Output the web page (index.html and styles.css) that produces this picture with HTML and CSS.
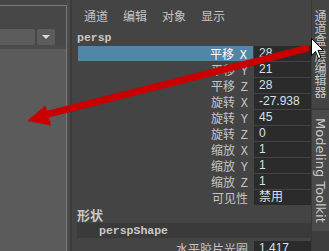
FILE: index.html
```html
<!DOCTYPE html>
<html>
<head>
<meta charset="utf-8">
<link rel="stylesheet" href="styles.css">
</head>
<body>
<div class="app">
  <div class="left">
    <div class="left-top"></div>
    <div class="left-frame">
      <div class="left-head">
        <div class="dd-field"></div>
        <div class="dd-btn"><span class="tri"></span></div>
      </div>
      <div class="left-gap"></div>
      <div class="left-body"></div>
    </div>
  </div>
  <div class="splitter"></div>
  <div class="cb">
    <div class="menu">
      <span class="mi">通道</span><span class="mi">编辑</span><span class="mi">对象</span><span class="mi">显示</span>
    </div>
    <div class="node">persp</div>
    <div class="rows">
      <div class="row sel"><div class="lab">平移 <span class="ax">X</span></div><div class="val">28</div></div>
      <div class="row"><div class="lab">平移 <span class="ax">Y</span></div><div class="val">21</div></div>
      <div class="row"><div class="lab">平移 <span class="ax">Z</span></div><div class="val">28</div></div>
      <div class="row"><div class="lab">旋转 <span class="ax">X</span></div><div class="val">-27.938</div></div>
      <div class="row"><div class="lab">旋转 <span class="ax">Y</span></div><div class="val">45</div></div>
      <div class="row"><div class="lab">旋转 <span class="ax">Z</span></div><div class="val">0</div></div>
      <div class="row"><div class="lab">缩放 <span class="ax">X</span></div><div class="val">1</div></div>
      <div class="row"><div class="lab">缩放 <span class="ax">Y</span></div><div class="val">1</div></div>
      <div class="row"><div class="lab">缩放 <span class="ax">Z</span></div><div class="val">1</div></div>
      <div class="row"><div class="lab">可见性</div><div class="val">禁用</div></div>
    </div>
    <div class="sect">形状</div>
    <div class="shape">perspShape</div>
    <div class="rows">
      <div class="row"><div class="lab">水平胶片光圈</div><div class="val">1.417</div></div>
    </div>
  </div>
  <div class="tabs">
    <div class="tab active"><span class="vt">通道盒/层编辑器</span></div>
    <div class="tab tk"><span class="vt lat">Modeling Toolkit</span></div>
    <div class="tab rest"></div>
  </div>
</div>
<svg class="overlay" width="329" height="251" viewBox="0 0 329 251">
  <line x1="306" y1="48.6" x2="46" y2="114.6" stroke="#c80000" stroke-width="7" stroke-linecap="round"/>
  <polygon points="27,121 45.5,105.5 51,125.5" fill="#c80000"/>
  <path d="M311.5 38.5 L311.5 55.5 L315.5 51.5 L318.5 58.5 L321 57.5 L318 50.5 L323.5 50.5 Z" fill="#fff" stroke="#000" stroke-width="1" stroke-linejoin="miter"/>
</svg>
</body>
</html>
```

FILE: styles.css
```css
html, body {
  margin: 0;
  padding: 0;
}
body {
  width: 329px;
  height: 251px;
  overflow: hidden;
  background: #444444;
  position: relative;
  font-family: "Noto Sans CJK SC", "Liberation Sans", sans-serif;
}
.app {
  display: flex;
  width: 329px;
  height: 251px;
}
.left {
  width: 67px;
  display: flex;
  flex-direction: column;
  flex-shrink: 0;
}
.left-top {
  height: 5px;
  background: #454545;
}
.left-frame {
  flex: 1;
  display: flex;
  flex-direction: column;
  border-top: 1px solid #7a7a7a;
  border-right: 1px solid #7a7a7a;
  background: #474747;
}
.left-head {
  display: flex;
  gap: 2px;
  padding-top: 23px;
  height: 16px;
}
.dd-field {
  width: 35px;
  height: 16px;
  background: #5c5c5c;
  border-radius: 0 2px 2px 0;
}
.dd-btn {
  width: 18px;
  height: 16px;
  background: #5c5c5c;
  border-radius: 2px;
  display: flex;
  align-items: center;
  justify-content: center;
}
.tri {
  width: 0;
  height: 0;
  border-left: 4px solid transparent;
  border-right: 4px solid transparent;
  border-top: 4px solid #dcdcdc;
}
.left-gap {
  height: 4px;
  background: #4b4b4b;
}
.left-body {
  flex: 1;
  background: #5b5b5b;
}
.splitter {
  width: 3px;
  background: #4a4a4a;
  border-right: 2px solid #3b3b3b;
  flex-shrink: 0;
}
.cb {
  width: 239px;
  flex-shrink: 0;
  background: #444444;
  overflow: hidden;
}
.menu {
  height: 31px;
  box-sizing: border-box;
  padding: 7px 0 0 12px;
  display: flex;
  gap: 15px;
  font-size: 12px;
  line-height: 18px;
  color: #c4c4c4;
}
.node {
  height: 15px;
  box-sizing: border-box;
  padding-left: 5px;
  font-family: "Liberation Mono", monospace;
  font-weight: bold;
  font-size: 11.5px;
  line-height: 13px;
  color: #c8c8c8;
}
.rows {
  margin-left: 6px;
  display: flex;
  flex-direction: column;
}
.row {
  display: grid;
  grid-template-columns: 176px 57px;
  height: 16px;
}
.lab {
  height: 15px;
  box-sizing: border-box;
  padding-right: 6px;
  text-align: right;
  font-size: 12px;
  line-height: 15px;
  color: #c4c4c4;
  white-space: nowrap;
}
.row.sel .lab {
  background: #5285a6;
  color: #ffffff;
  margin-right: 1px;
}
.ax {
  font-family: "Liberation Mono", monospace;
  font-size: 12px;
  margin-left: 3px;
}
.val {
  height: 15px;
  box-sizing: border-box;
  background: #2b2b2b;
  padding-left: 5px;
  font-family: "Liberation Sans", "Noto Sans CJK SC", sans-serif;
  font-size: 12px;
  line-height: 15px;
  color: #d6e2ec;
  white-space: nowrap;
  overflow: hidden;
}
.sect {
  height: 16px;
  margin-top: 1px;
  padding-left: 5px;
  font-size: 13px;
  font-weight: bold;
  line-height: 16px;
  color: #c8c8c8;
}
.shape {
  height: 15px;
  margin: 0 0 3px 5px;
  padding-left: 22px;
  background: #3a3a3a;
  font-family: "Liberation Mono", monospace;
  font-weight: bold;
  font-size: 11.5px;
  line-height: 15px;
  color: #c8c8c8;
}
.tabs {
  width: 17px;
  flex-shrink: 0;
  border-left: 1px solid #383838;
  display: flex;
  flex-direction: column;
  background: #3c3c3c;
}
.tab {
  display: flex;
  justify-content: center;
  color: #c8c8c8;
}
.tab.active {
  height: 108px;
  background: #444444;
  padding-top: 10px;
  box-sizing: border-box;
}
.tab.tk {
  height: 122px;
  margin-top: 1px;
  background: #4a4a4a;
  padding-top: 8px;
  box-sizing: border-box;
  border-top: 1px solid #3a3a3a;
}
.tab.rest {
  flex: 1;
}
.vt {
  writing-mode: vertical-rl;
  font-size: 12px;
  line-height: 17px;
  white-space: nowrap;
}
.vt.lat {
  font-family: "DejaVu Sans", sans-serif;
  font-size: 13px;
}
.overlay {
  position: absolute;
  left: 0;
  top: 0;
  pointer-events: none;
}
```
